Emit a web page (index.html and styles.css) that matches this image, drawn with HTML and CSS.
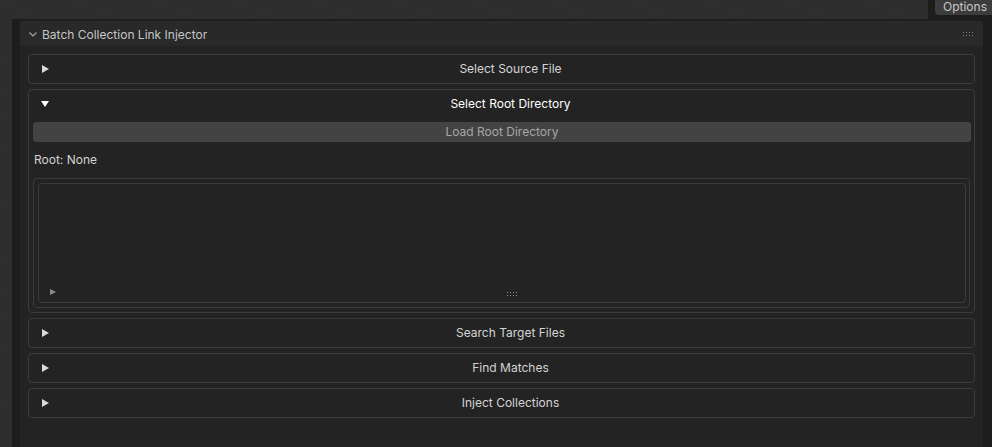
FILE: index.html
```html
<!DOCTYPE html>
<html>
<head>
<meta charset="utf-8">
<link rel="stylesheet" href="styles.css">
</head>
<body>
<div class="screen">
  <div class="topbar">
    <div class="tabs"><div class="tab">Options</div></div>
  </div>
  <div class="region">
    <div class="panel">
      <div class="panel-head">
        <svg class="chev" width="8" height="5" viewBox="0 0 8 5"><path d="M0.5 0.5 L4 4 L7.5 0.5" fill="none" stroke="#a8a8a8" stroke-width="1.1"/></svg>
        <span class="panel-title">Batch Collection Link Injector</span>
        <span class="grip grip-head"></span>
      </div>
      <div class="panel-body">
        <div class="box">
          <div class="box-head">
            <span class="tri-right"></span>
            <span class="box-title">Select Source File</span>
          </div>
        </div>
        <div class="box">
          <div class="box-head">
            <span class="tri-down"></span>
            <span class="box-title open">Select Root Directory</span>
          </div>
          <div class="box-content">
            <div class="btn">Load Root Directory</div>
            <div class="label">Root: None</div>
            <div class="list-outer">
              <div class="list-inner">
                <span class="tri-small"></span>
                <span class="grip grip-list"></span>
              </div>
            </div>
          </div>
        </div>
        <div class="box">
          <div class="box-head">
            <span class="tri-right"></span>
            <span class="box-title">Search Target Files</span>
          </div>
        </div>
        <div class="box">
          <div class="box-head">
            <span class="tri-right"></span>
            <span class="box-title">Find Matches</span>
          </div>
        </div>
        <div class="box">
          <div class="box-head">
            <span class="tri-right"></span>
            <span class="box-title">Inject Collections</span>
          </div>
        </div>
      </div>
    </div>
  </div>
</div>
</body>
</html>
```

FILE: styles.css
```css
* { box-sizing: border-box; }
html, body {
  margin: 0;
  padding: 0;
  width: 992px;
  height: 447px;
  overflow: hidden;
  background: #2d2d2d;
  font-family: Inter, "Noto Sans", "DejaVu Sans", sans-serif;
  font-size: 12px;
}
.screen {
  width: 992px;
  height: 447px;
  display: flex;
  flex-direction: column;
  background: repeating-linear-gradient(172deg, #2e2e2e 0px, #2e2e2e 9px, #2b2b2b 10px, #2e2e2e 11px);
}
.topbar {
  height: 19px;
  flex: none;
  display: flex;
  justify-content: flex-end;
}
.tabs {
  width: 64px;
  background: #1d1d1d;
  padding-left: 7px;
}
.tab {
  height: 15px;
  background: #3c3c3c;
  color: #c8c8c8;
  border-bottom-left-radius: 4px;
  line-height: 13px;
  padding-left: 8px;
  font-size: 12px;
}
.region {
  flex: 1;
  margin-left: 12px;
  background: #1d1d1d;
  padding: 2px 9px 0 8px;
  display: flex;
  flex-direction: column;
}
.panel {
  flex: 1;
  display: flex;
  flex-direction: column;
}
.panel-head {
  height: 25px;
  background: #292929;
  border-radius: 3px 3px 0 0;
  display: flex;
  align-items: center;
  padding-left: 9px;
  padding-right: 10px;
  padding-top: 1px;
}
.chev { flex: none; margin-right: 5px; margin-top: 0px; }
.panel-title {
  color: #c6c6c6;
  flex: 1;
}
.panel-body {
  flex: 1;
  background: #232323;
  padding: 8px 8px;
  display: flex;
  flex-direction: column;
  gap: 5px;
}
.box {
  border: 1px solid #3b3b3b;
  border-radius: 4px;
}
.box-head {
  height: 28px;
  display: flex;
  align-items: center;
  justify-content: center;
  position: relative;
  padding-left: 18px;
  padding-bottom: 2px;
}
.box-title {
  color: #d4d4d4;
}
.box-title.open { color: #ffffff; }
.tri-right {
  position: absolute;
  left: 13px;
  top: 10px;
  width: 0;
  height: 0;
  border-top: 4px solid transparent;
  border-bottom: 4px solid transparent;
  border-left: 7px solid #dadada;
}
.tri-down {
  position: absolute;
  left: 12px;
  top: 11px;
  width: 0;
  height: 0;
  border-left: 4.5px solid transparent;
  border-right: 4.5px solid transparent;
  border-top: 6px solid #ffffff;
}
.box-content {
  padding: 4px 3px 4px 4px;
}
.btn {
  height: 20px;
  background: #434343;
  border-radius: 3px;
  color: #a6a6a6;
  display: flex;
  align-items: center;
  justify-content: center;
  padding-bottom: 1px;
}
.label {
  height: 36px;
  display: flex;
  align-items: center;
  color: #d2d2d2;
  padding-bottom: 2px;
  padding-left: 1px;
}
.list-outer {
  height: 130px;
  border: 1px solid #3b3b3b;
  border-radius: 4px;
  padding: 4px 3px 4px 4px;
  margin-right: 1px;
}
.list-inner {
  height: 100%;
  border: 1px solid #3b3b3b;
  border-radius: 4px;
  position: relative;
  display: flex;
  align-items: flex-end;
  justify-content: center;
  padding-bottom: 6px;
}
.tri-small {
  position: absolute;
  left: 11px;
  bottom: 7px;
  width: 0;
  height: 0;
  border-top: 3px solid transparent;
  border-bottom: 3px solid transparent;
  border-left: 6px solid #8c8c8c;
}
.grip {
  display: block;
  width: 10px;
  height: 4px;
  background-image: linear-gradient(90deg, currentColor 1px, transparent 1px);
  background-size: 3px 3px;
  -webkit-mask-image: linear-gradient(#000 1px, transparent 1px);
  -webkit-mask-size: 3px 3px;
  mask-image: linear-gradient(#000 1px, transparent 1px);
  mask-size: 3px 3px;
}
.grip-head { color: #7a7a7a; }
.grip-list {
  color: #8c8c8c;
  margin-left: 20px;
}
```
